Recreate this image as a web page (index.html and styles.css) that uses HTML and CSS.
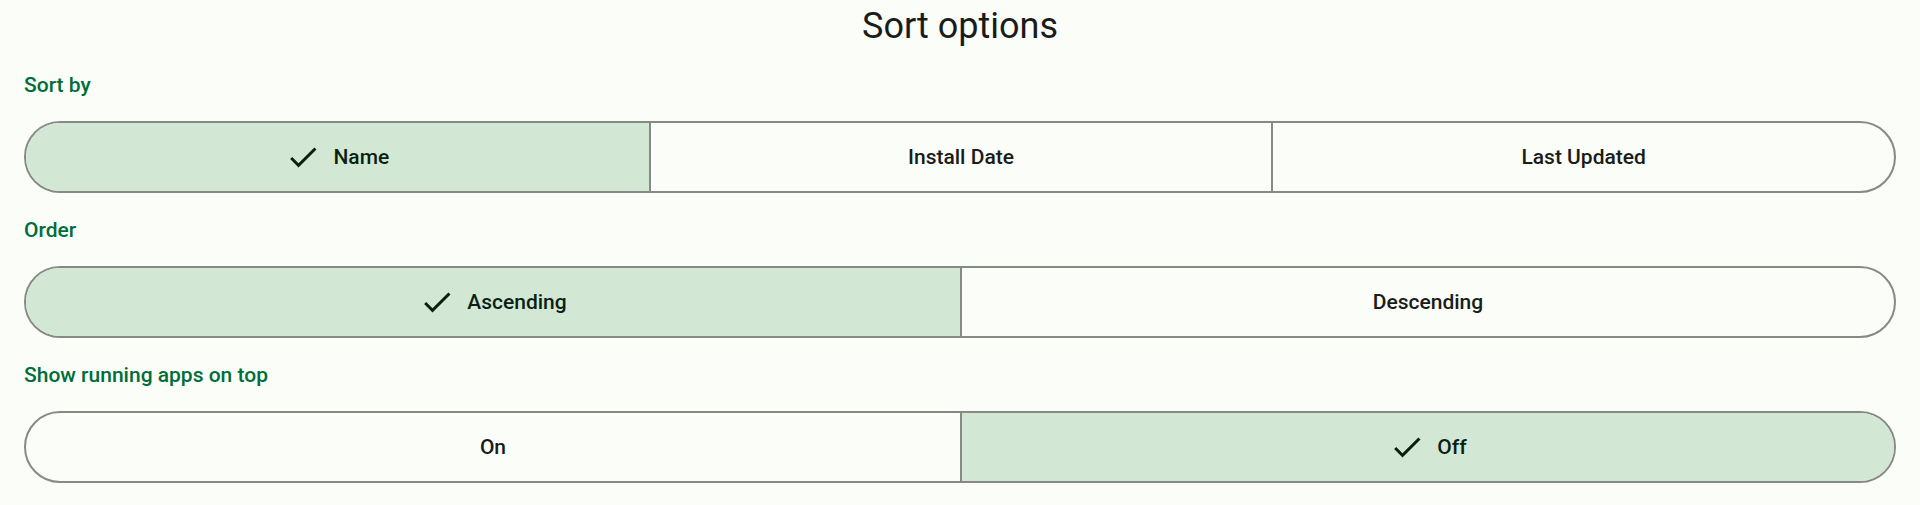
FILE: index.html
```html
<!DOCTYPE html>
<html lang="en">
<head>
<meta charset="utf-8">
<title>Sort options</title>
<link rel="stylesheet" href="styles.css">
</head>
<body>
<main class="sheet">
  <h1 class="title">Sort options</h1>

  <section class="group">
    <h2 class="label">Sort by</h2>
    <div class="segmented cols-3">
      <button class="seg selected"><svg class="check" viewBox="0 0 24 24"><path d="M9 16.17L4.83 12l-1.42 1.41L9 19 21 7l-1.41-1.41z"/></svg><span>Name</span></button>
      <button class="seg"><span>Install Date</span></button>
      <button class="seg"><span>Last Updated</span></button>
    </div>
  </section>

  <section class="group">
    <h2 class="label">Order</h2>
    <div class="segmented cols-2">
      <button class="seg selected"><svg class="check" viewBox="0 0 24 24"><path d="M9 16.17L4.83 12l-1.42 1.41L9 19 21 7l-1.41-1.41z"/></svg><span>Ascending</span></button>
      <button class="seg"><span>Descending</span></button>
    </div>
  </section>

  <section class="group">
    <h2 class="label">Show running apps on top</h2>
    <div class="segmented cols-2">
      <button class="seg"><span>On</span></button>
      <button class="seg selected"><svg class="check" viewBox="0 0 24 24"><path d="M9 16.17L4.83 12l-1.42 1.41L9 19 21 7l-1.41-1.41z"/></svg><span>Off</span></button>
    </div>
  </section>
</main>
</body>
</html>
```

FILE: styles.css
```css
html, body {
  margin: 0;
  padding: 0;
  background: #fbfdf8;
  font-family: Roboto, "Noto Sans", "Liberation Sans", sans-serif;
  color: #191c19;
}

.sheet {
  padding: 2px 24px 0;
}

.title {
  margin: 0;
  height: 48px;
  font-size: 36px;
  line-height: 48px;
  font-weight: 400;
  text-align: center;
  color: #191c19;
}

.group {
  display: flex;
  flex-direction: column;
  margin-top: 20px;
}

.group + .group {
  margin-top: 22px;
}

.label {
  margin: 0 0 21px;
  height: 30px;
  font-size: 21px;
  line-height: 30px;
  font-weight: 500;
  color: #006d3a;
}

.segmented {
  display: grid;
  height: 72px;
  box-sizing: border-box;
  border: 2px solid #858a83;
  border-radius: 36px;
  overflow: hidden;
}

.cols-3 { grid-template-columns: repeat(3, 1fr); }
.cols-2 { grid-template-columns: repeat(2, 1fr); }

.seg {
  display: flex;
  align-items: center;
  justify-content: center;
  gap: 12px;
  margin: 0;
  padding: 0;
  border: 0;
  background: transparent;
  font-family: Roboto, "Noto Sans", "Liberation Sans", sans-serif;
  font-size: 21px;
  font-weight: 500;
  color: #191c19;
}

.seg + .seg {
  border-left: 2px solid #858a83;
}

.seg.selected {
  background: #d2e8d4;
  color: #0c1f13;
}

.check {
  width: 36px;
  height: 36px;
  fill: currentColor;
  flex: none;
}
```
